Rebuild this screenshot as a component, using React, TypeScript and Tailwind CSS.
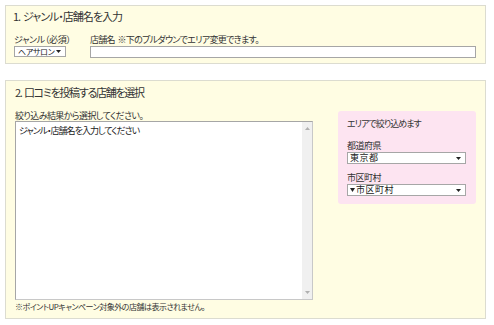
import React from "react";

function Tri({ up = false, color = "#222", w = 5, h = 3 }: { up?: boolean; color?: string; w?: number; h?: number }) {
  return (
    <svg width={w} height={h} viewBox={`0 0 ${w} ${h}`} className="shrink-0">
      {up ? (
        <polygon points={`0,${h} ${w},${h} ${w / 2},0`} fill={color} />
      ) : (
        <polygon points={`0,0 ${w},0 ${w / 2},${h}`} fill={color} />
      )}
    </svg>
  );
}

function Sel({ children, w }: { children: React.ReactNode; w: string }) {
  return (
    <div className={`${w} h-[12px] border border-[#a6a6a6] bg-white flex items-center justify-between pl-[2px] pr-[4px]`}>
      <span className="flex items-center text-[9px] leading-[10px] text-[#222] tracking-[0.5px] whitespace-nowrap">{children}</span>
      <Tri />
    </div>
  );
}

export default function App() {
  return (
    <div className="w-[494px] h-[325px] bg-white pt-[5px] pl-[5px] font-['Noto_Sans_CJK_JP','Noto_Sans',sans-serif] text-[#333] [font-feature-settings:'palt']">
      <section className="w-[481px] h-[59px] border border-[#dcdcd0] bg-[#fffde3] pl-[7px] pt-[4px]">
        <div className="text-[11px] leading-[13px] whitespace-nowrap tracking-[-1px]">1.&nbsp;&nbsp;ジャンル・店舗名を入力</div>
        <div className="flex mt-[11px]">
          <div className="w-[77px] pl-[1px]">
            <div className="text-[9px] leading-[12px] whitespace-nowrap tracking-[-0.3px]">ジャンル（必須）</div>
            <div className="w-[52px] h-[11px] border border-[#a6a6a6] bg-white flex items-center justify-between pl-[3px] pr-[4px]">
              <span className="text-[8px] leading-[10px] text-[#222] whitespace-nowrap tracking-[-0.3px]">ヘアサロン</span>
              <Tri />
            </div>
          </div>
          <div>
            <div className="text-[9px] leading-[12px] whitespace-nowrap tracking-[-0.7px]">店舗名&nbsp;&nbsp;※下のプルダウンでエリア変更できます。</div>
            <div className="w-[386px] h-[12px] border border-[#a6a6a6] bg-white" />
          </div>
        </div>
      </section>

      <section className="w-[481px] h-[239px] mt-[16px] border border-[#dcdcd0] bg-[#fffde3] pl-[9px] pt-[5px]">
        <div className="text-[11px] leading-[13px] whitespace-nowrap tracking-[-1.3px]">2.&nbsp;&nbsp;口コミを投稿する店舗を選択</div>
        <div className="flex mt-[11px]">
          <div className="w-[298px]">
            <div className="text-[9px] leading-[11px] whitespace-nowrap tracking-[-0.6px]">絞り込み結果から選択してください。</div>
            <div className="w-[298px] h-[179px] border border-[#a6a6a6] border-b-[#c8c8c8] border-r-[#c8c8c8] bg-white flex">
              <div className="flex-1 pl-[3px] pt-[3px] text-[9px] leading-[12px] text-[#222] whitespace-nowrap tracking-[-1px]">ジャンル・店舗名を入力してください</div>
              <div className="w-[10px] bg-[#f0f0f0] flex flex-col justify-between items-center py-[5px]">
                <Tri up color="#b0b0b0" />
                <Tri color="#b0b0b0" />
              </div>
            </div>
            <div className="text-[8px] leading-[13px] whitespace-nowrap tracking-[-0.5px]">※ポイントUPキャンペーン対象外の店舗は表示されません。</div>
          </div>
          <div className="ml-[25px] mt-[1px] w-[138px] h-[93px] rounded-[3px] bg-[#fde4f1] pl-[9px] pt-[7px]">
            <div className="text-[9px] leading-[12px] whitespace-nowrap tracking-[-1px]">エリアで絞り込めます</div>
            <div className="mt-[10px] text-[9px] leading-[12px] tracking-[-0.5px]">都道府県</div>
            <Sel w="w-[119px]">東京都</Sel>
            <div className="mt-[8px] text-[9px] leading-[12px] tracking-[-0.5px]">市区町村</div>
            <Sel w="w-[119px]">
              <Tri w={5} h={4} />
              <span className="ml-[1px]">市区町村</span>
            </Sel>
          </div>
        </div>
      </section>
    </div>
  );
}
